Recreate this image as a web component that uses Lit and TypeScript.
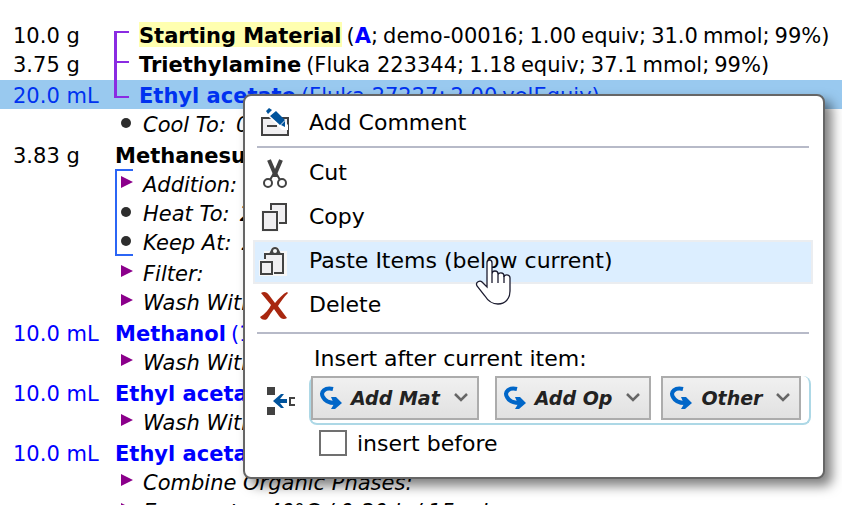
import { LitElement, html, css, svg, nothing } from "lit";
import { customElement, property } from "lit/decorators.js";

type Part = { text: string; kind?: "tight" | "ref" };
interface Row {
  qty?: string;
  name?: string;
  parts?: Part[];
  op?: string;
  value?: string;
  mark?: "dot" | "arrow";
  blue?: boolean;
  selected?: boolean;
  marked?: boolean;
}
interface Group { bracket?: "purple" | "blue"; gap?: boolean; rows: Row[]; }

const t = (text: string): Part => ({ text });
const tight = (text: string): Part => ({ text, kind: "tight" });

const GROUPS: Group[] = [
  { bracket: "purple", rows: [
    { qty: "10.0 g", name: "Starting Material", marked: true, parts: [tight("("), { text: "A", kind: "ref" }, t(";"), tight("demo-00016;"), tight("1.00"), tight("equiv;"), tight("31.0"), tight("mmol;"), tight("99%)")] },
    { qty: "3.75 g", name: "Triethylamine", parts: [tight("(Fluka 223344;"), tight("1.18"), tight("equiv;"), tight("37.1"), tight("mmol;"), tight("99%)")] },
    { qty: "20.0 mL", name: "Ethyl acetate", blue: true, selected: true, parts: [tight("(Fluka 27227;"), tight("2.00"), tight("volEquiv)")] },
  ] },
  { rows: [{ mark: "dot", op: "Cool To:", value: "0°C" }] },
  { gap: true, rows: [{ qty: "3.83 g", name: "Methanesulfonyl chloride", parts: [tight("(Fluka 64260;"), tight("1.08"), tight("equiv;"), tight("33.4"), tight("mmol)")] }] },
  { bracket: "blue", rows: [
    { mark: "arrow", op: "Addition:" },
    { mark: "dot", op: "Heat To:", value: "20°C" },
    { mark: "dot", op: "Keep At:", value: "20°C" },
  ] },
  { gap: true, rows: [{ mark: "arrow", op: "Filter:" }, { mark: "arrow", op: "Wash With:" }] },
  { gap: true, rows: [{ qty: "10.0 mL", name: "Methanol", blue: true, parts: [tight("(1.00"), tight("volEquiv)")] }, { mark: "arrow", op: "Wash With:" }] },
  { gap: true, rows: [{ qty: "10.0 mL", name: "Ethyl acetate", blue: true }, { mark: "arrow", op: "Wash With:" }] },
  { gap: true, rows: [{ qty: "10.0 mL", name: "Ethyl acetate", blue: true }, { mark: "arrow", op: "Combine Organic Phases:" }, { mark: "arrow", op: "Evaporate:", value: "40°C / 0-20 h / 15 mbar" }] },
];

const ICONS = {
  comment: svg`<path d="M3 10h26v17H3z" fill="#f0eff1" stroke="#424242" stroke-width="2"/><path d="M8 18h10" stroke="#424242" stroke-width="2"/><path d="M6 5l6-5 17 17v5h-6z" fill="#fff"/><path d="M7 3l3-3 3 2-4 4zM11 8l6-5 9 9-5 5zM22 17l4-4v6z" fill="#00539c"/>`,
  cut: svg`<g fill="none" stroke="#424242"><path d="M10 2l6 14M22 2l-6 14" stroke-width="4"/><path d="M15 15l-4 7M17 15l4 7" stroke-width="2"/><path d="M14 17h4" stroke-width="4"/><circle cx="9" cy="25" r="4" stroke-width="2"/><circle cx="23" cy="25" r="4" stroke-width="2"/></g>`,
  copy: svg`<path d="M12 2h15v19H12z" fill="#f0eff1" stroke="#424242" stroke-width="2"/><path d="M2 8h18v22H2z" fill="#f6f6f6"/><path d="M4 10h14v18H4z" fill="#f0eff1" stroke="#424242" stroke-width="2"/>`,
  paste: svg`<path d="M0 14h5V5h6l2-4h6l2 4h7v25H0z" fill="#f6f6f6"/><path d="M7 8h17v19H7z" fill="#f0eff1"/><path d="M6 13V8h18v19h-9" fill="none" stroke="#424242" stroke-width="2"/><path d="M10 8l2-4c1-4 7-4 8 0l2 4z" fill="#424242"/><circle cx="16" cy="5" r="2" fill="#f6f6f6"/><path d="M2 16h11v12H2z" fill="#f0eff1" stroke="#424242" stroke-width="2"/>`,
  remove: svg`<path d="M2 3c3-2 6-1 8 2l6 8C20 8 24 4 28 2l1 1c-4 4-7 8-10 13l9 12c-3 2-6 1-8-2l-5-7c-4 5-6 9-7 10-3 2-6 0-7-2 5-3 9-8 11-12z" fill="#a8270f"/>`,
  insert: svg`<path d="M2 3h8v8H2zM2 23h8v8H2z" fill="#424242"/><path d="M8 17l8-7h3l-4 5h7v4h-7l4 5h-3z" fill="#00539c"/><path d="M30 14h-5v7h5" fill="none" stroke="#424242" stroke-width="2"/>`,
};

@customElement("protocol-list")
class ProtocolList extends LitElement {
  static styles = css`
    :host { display: block; padding-top: 20px; font-size: 21px; line-height: 32px; color: #000; }
    .group { position: relative; }
    .gap { margin-top: 2px; }
    .row { display: flex; height: 29px; white-space: nowrap; }
    .qty { flex: 0 0 115px; padding-left: 13px; box-sizing: border-box; }
    .bracketed .qty { flex-basis: 139px; }
    .blue { color: #00f; }
    .selected { background: #99c9ef; color: #0032f0; margin-top: 2px; }
    .name { font-weight: bold; }
    .marked { background: #ffffb0; height: 25px; line-height: 28px; margin-top: 2px; }
    .parts { display: flex; gap: 5px; margin-left: 5px; }
    .lead { display: flex; }
    .ref { color: #00f; font-weight: bold; }
    .op { display: flex; gap: 8px; font-style: italic; }
    .value { margin-left: 2px; }
    .mark { width: 16px; height: 14px; margin: 7px 0 0 4px; }
    .bracket { position: absolute; box-sizing: border-box; pointer-events: none; }
    .purple { left: 114px; top: 11px; width: 15px; height: 67px; border: 2px solid #8a2be2; border-right: none; border-left-width: 3px; }
    .purple::after { content: ""; display: block; height: 2px; margin-top: 28px; background: #8a2be2; }
    .side { left: 115px; top: 0; width: 18px; height: 87px; border: 2px solid #2b65f5; border-right: none; }
  `;

  private parts(parts: Part[]) {
    // Text that touches its neighbour is kept in one box; the rest is spaced by the gap.
    const boxes: Part[][] = [];
    for (const p of parts) {
      if (p.kind === "tight") boxes.push([p]);
      else boxes[boxes.length - 1].push(p);
    }
    return html`<span class="parts">${boxes.map((b) => html`<span class="lead">${b.map((p) => html`<span class=${p.kind === "ref" ? "ref" : ""}>${p.text}</span>`)}</span>`)}</span>`;
  }

  private row(r: Row) {
    return html`<div class="row ${r.blue ? "blue" : ""} ${r.selected ? "selected" : ""}">
      <span class="qty">${r.qty ?? ""}</span>
      ${r.op
        ? html`<span class="op"><svg class="mark" viewBox="0 0 16 14">${r.mark === "dot" ? svg`<circle cx="7" cy="7" r="5" fill="#2d2d2d"/>` : svg`<path d="M2 0l12 6-12 6z" fill="#8b008b"/>`}</svg><span>${r.op}</span>${r.value ? html`<span class="value">${r.value}</span>` : nothing}</span>`
        : html`<span class="name ${r.marked ? "marked" : ""}">${r.name}</span>${r.parts ? this.parts(r.parts) : nothing}`}
    </div>`;
  }

  render() {
    return GROUPS.map((g) => html`<div class="group ${g.gap ? "gap" : ""} ${g.bracket === "purple" ? "bracketed" : ""}">
      ${g.rows.map((r) => this.row(r))}
      ${g.bracket ? html`<div class="bracket ${g.bracket === "purple" ? "purple" : "side"}"></div>` : nothing}
    </div>`);
  }
}

@customElement("menu-item")
class MenuItem extends LitElement {
  @property() icon: keyof typeof ICONS = "comment";
  @property() label = "";
  @property({ type: Boolean }) active = false;
  static styles = css`
    :host { display: block; }
    .item { display: flex; align-items: center; gap: 18px; width: 100%; height: 44px; padding: 0 0 4px 4px; box-sizing: border-box; border: 2px solid transparent; background: none; font: inherit; color: #000; text-align: left; }
    .active { background: #dceeff; border-color: #ebedf0; }
    .icon { width: 32px; height: 32px; margin-top: 4px; }
  `;
  render() {
    return html`<button class="item ${this.active ? "active" : ""}"><svg class="icon" viewBox="0 0 32 32">${ICONS[this.icon]}</svg>${this.label}</button>`;
  }
}

@customElement("context-menu")
class ContextMenu extends LitElement {
  static styles = css`
    :host { display: block; box-sizing: border-box; padding: 6px 10px 21px 8px; border: 2px solid #666; border-radius: 8px; background: #fff; box-shadow: 7px 7px 12px rgba(0, 0, 0, .5); font-size: 22px; }
    .rule { height: 2px; margin: 0 4px; border: none; background: #b7bac8; }
    .edit { padding: 4px 0; }
    .title { margin: 11px 0 3px 61px; line-height: 28px; }
    .insert { display: flex; align-items: center; gap: 12px; padding-left: 12px; }
    .icon { width: 32px; height: 34px; }
    .tray { display: flex; flex: 1; gap: 10px; padding: 0 6px 3px 0; margin-right: 2px; border: 2px solid #add8e6; border-top: none; border-radius: 8px; }
    .pick { display: flex; align-items: center; box-sizing: border-box; height: 44px; padding: 0 9px 0 6px; border: 2px solid #acacac; background: linear-gradient(#f0f0f0, #e1e1e1); color: #222; font: italic bold 19px/24px "DejaVu Sans", sans-serif; }
    .pick:first-child { margin-right: 6px; }
    .hook { width: 24px; height: 24px; margin-right: 8px; }
    .chev { width: 14px; height: 10px; margin-left: 14px; }
    .before { display: flex; align-items: center; gap: 10px; margin: 5px 0 0 66px; }
    .box { appearance: none; box-sizing: border-box; width: 28px; height: 26px; margin: 0; border: 2px solid #707070; background: #fff; }
  `;
  render() {
    return html`
      <menu-item icon="comment" label="Add Comment"></menu-item>
      <hr class="rule">
      <div class="edit">
        <menu-item icon="cut" label="Cut"></menu-item>
        <menu-item icon="copy" label="Copy"></menu-item>
        <menu-item icon="paste" label="Paste Items (below current)" active></menu-item>
        <menu-item icon="remove" label="Delete"></menu-item>
      </div>
      <hr class="rule">
      <div class="title">Insert after current item:</div>
      <div class="insert">
        <svg class="icon" viewBox="0 0 32 34">${ICONS.insert}</svg>
        <div class="tray">
          ${["Add Mat", "Add Op", "Other"].map((name) => html`<button class="pick">
            <svg class="hook" viewBox="0 0 24 24"><path d="M14 3C6 1 1 6 4 11c2 4 6 6 12 6" fill="none" stroke="#0066c8" stroke-width="4"/><path d="M12 11h5l6 6-7 6h-4l3-5z" fill="#0066c8"/></svg>
            ${name}
            <svg class="chev" viewBox="0 0 14 10"><path d="M1 1l6 6 6-6" fill="none" stroke="#666" stroke-width="2.5"/></svg>
          </button>`)}
        </div>
      </div>
      <label class="before"><input class="box" type="checkbox">insert before</label>
    `;
  }
}

@customElement("app-root")
class AppRoot extends LitElement {
  static styles = css`
    :host { display: block; position: relative; height: 100vh; overflow: hidden; background: #fff; font-family: "DejaVu Sans", sans-serif; }
    .menu { position: absolute; left: 243px; top: 94px; width: 582px; }
    .hand { position: absolute; left: 474px; top: 257px; width: 38px; height: 50px; }
  `;
  render() {
    return html`
      <protocol-list></protocol-list>
      <context-menu class="menu"></context-menu>
      <svg class="hand" viewBox="0 0 38 50"><path d="M13 30V6c0-4 5-4 5 0v11c0-4 6-4 6 0v1c0-3 6-3 6 1v1c0-3 6-3 6 1v13c0 8-5 13-12 13-6 0-10-3-13-8L3 29c-2-4 3-6 5-4z" fill="#fff" stroke="#1c1c30" stroke-width="1.3"/><path d="M18 17v9M24 18v8M30 19v7" stroke="#1c1c30" stroke-width="1.3"/></svg>
    `;
  }
}
